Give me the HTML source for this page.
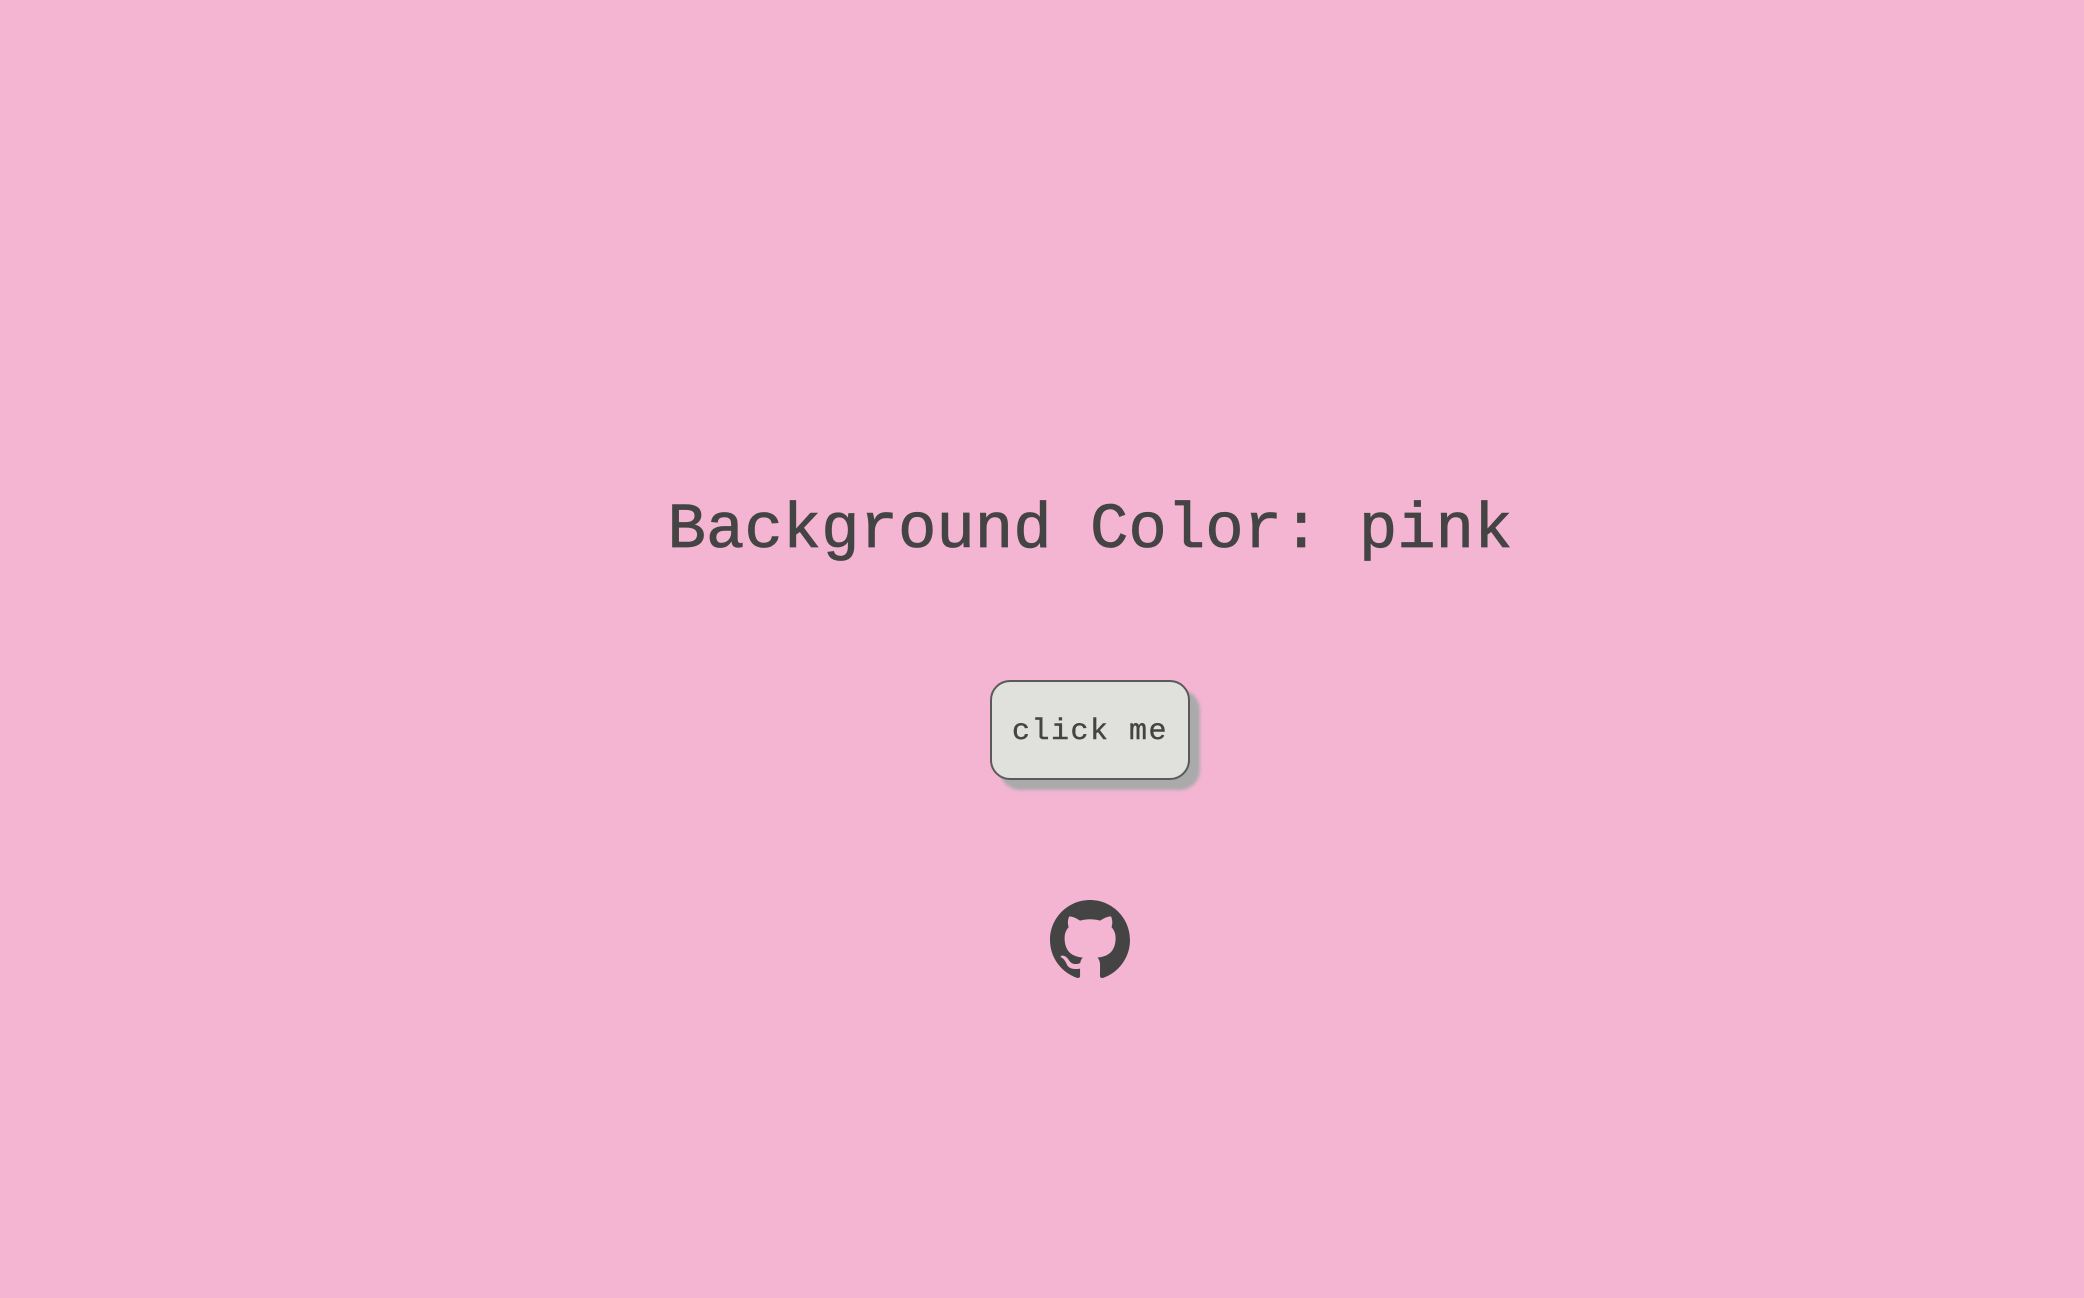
<!DOCTYPE html>
<html>
<head>
<meta charset="utf-8">
<style>
  html,body{margin:0;padding:0;}
  body{width:2084px;height:1298px;background:#f4b5d3;position:relative;overflow:hidden;font-family:"Liberation Mono","DejaVu Sans Mono",monospace;color:#444;}
  .title{position:absolute;left:0;width:2180px;top:486px;text-align:center;font-size:64px;letter-spacing:0;line-height:90px;white-space:nowrap;-webkit-text-stroke:0.8px #444;}
  .btn{position:absolute;left:990px;top:680px;width:200px;height:100px;box-sizing:border-box;border:2px solid #5a5a5a;border-radius:20px;background:#e0e0dc;box-shadow:10px 10px 3px #aaa;display:flex;align-items:center;justify-content:center;font-size:30px;letter-spacing:1.5px;color:#444;font-family:"Liberation Mono",monospace;padding-top:3px;-webkit-text-stroke:0.4px #444;}
  .gh{position:absolute;left:1050px;top:900px;width:80px;height:80px;}
</style>
</head>
<body>
<div class="title">Background Color: pink</div>
<div class="btn">click me</div>
<svg class="gh" viewBox="0 0 16 16"><path fill="#444" d="M8 0C3.58 0 0 3.58 0 8c0 3.540 2.29 6.53 5.47 7.59.4.07.55-.17.55-.38 0-.19-.01-.82-.01-1.49-2.01.37-2.53-.49-2.69-.94-.09-.23-.48-.94-.82-1.13-.28-.15-.68-.52-.01-.53.63-.01 1.08.58 1.23.82.72 1.21 1.87.87 2.33.66.07-.52.28-.87.51-1.07-1.78-.2-3.64-.89-3.64-3.95 0-.87.31-1.59.82-2.15-.08-.2-.36-1.02.08-2.12 0 0 .67-.21 2.2.82.64-.18 1.32-.27 2-.27.68 0 1.36.09 2 .27 1.53-1.04 2.2-.82 2.2-.82.44 1.1.16 1.92.08 2.12.51.56.82 1.27.82 2.15 0 3.07-1.87 3.75-3.65 3.95.29.25.54.73.54 1.48 0 1.07-.01 1.93-.01 2.2 0 .21.15.46.55.38A8.013 8.013 0 0016 8c0-4.42-3.58-8-8-8z"/></svg>
</body>
</html>
